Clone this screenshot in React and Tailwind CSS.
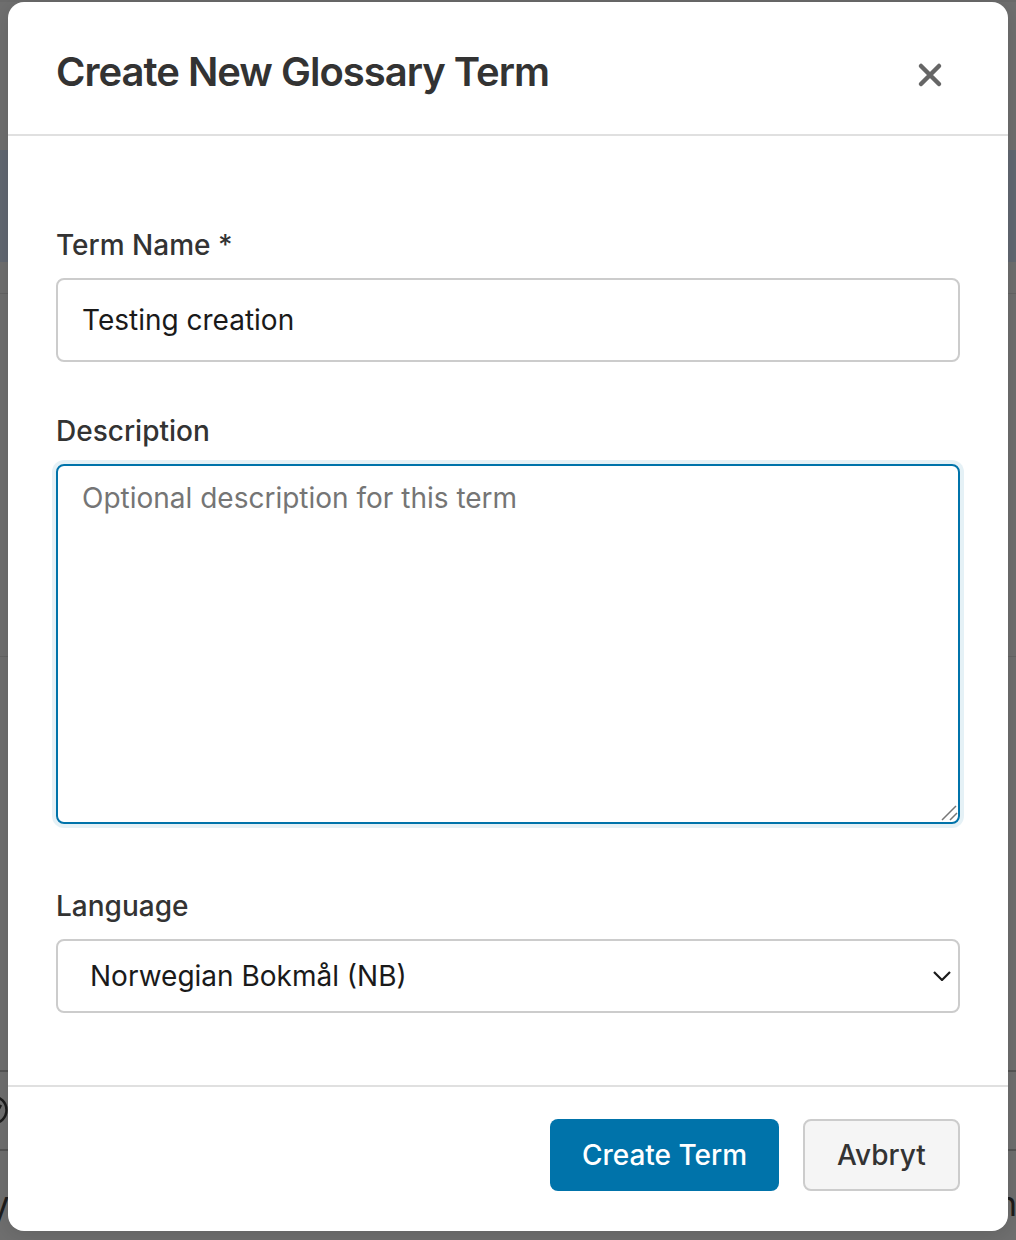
import React from "react";

const font = { fontFamily: "Inter, sans-serif" };

// page behind the overlay, only slivers of it show at the edges
const Backdrop = () => (
  <div className="flex flex-col h-full bg-[#6f6f6f]">
    <div className="h-[2px] bg-[#6a6a6a]" />
    <div className="h-[148px]" />
    <div className="h-[112px] bg-[#626872]" />
    <div className="h-[31px]" />
    <div className="h-px bg-[#646464]" />
    <div className="h-[362px]" />
    <div className="h-px bg-[#646464]" />
    <div className="h-[413px]" />
    <div className="h-[2px] bg-[#555555]" />
    <div className="h-[77px] pt-[23px] -ml-[22px]">
      <svg width="30" height="30" viewBox="0 0 30 30" fill="none" stroke="#1c1c1c" strokeWidth="2.5">
        <circle cx="15" cy="15" r="13.5" />
        <path d="M23 10L17 21" />
      </svg>
    </div>
    <div className="h-[2px] bg-[#555555]" />
    <div className="flex flex-1 items-start justify-between -ml-[14px] -mr-[1px] text-[34px] leading-[40px] text-[#1c1c1c]">
      <span className="mt-[39px]">V</span>
      <span className="mt-[33px]">n</span>
    </div>
  </div>
);

const Label = ({ children, className = "" }) => (
  <label className={`block text-[28px] leading-[33px] font-medium text-[#333333] ${className}`}>
    {children}
  </label>
);

export default function App() {
  return (
    <div className="relative w-[1016px] h-[1240px] overflow-hidden" style={font}>
      <Backdrop />
      <div className="absolute left-2 right-2 top-[2px] flex flex-col h-[1229px] bg-white rounded-[16px] shadow-[0_4px_20px_rgba(0,0,0,0.12)]">
        <div className="flex items-center justify-between h-[134px] border-b-2 border-[#e0e0e0] pl-12 pr-[65px]">
          <h2 className="text-[40px] leading-[48px] font-semibold text-[#333333] tracking-[-1px] mt-[8px]">
            Create New Glossary Term
          </h2>
          <svg width="26" height="26" viewBox="0 0 26 26" fill="none" stroke="#666666" strokeWidth="4.5" className="mt-[13px]">
            <path d="M4 4L22 22M22 4L4 22" strokeLinecap="round" />
          </svg>
        </div>

        <div className="flex-1 px-12 pt-[93px]">
          <Label>Term Name *</Label>
          <input
            readOnly
            value="Testing creation"
            className="block w-full h-[84px] mt-[16px] px-[24px] border-2 border-[#cccccc] rounded-[8px] text-[28px] text-[#1a1a1a] bg-white outline-none"
          />

          <Label className="mt-[53px]">Description</Label>
          <div className="relative mt-[16px] rounded-[8px] shadow-[0_0_0_4px_rgba(0,115,170,0.1)]">
            <textarea
              placeholder="Optional description for this term"
              className="block w-full h-[360px] px-[24px] py-[14px] border-2 border-[#0073aa] rounded-[8px] text-[28px] leading-[36px] bg-white outline-none resize-none placeholder:text-[#757575]"
            />
            <svg width="18" height="18" viewBox="0 0 18 18" fill="none" stroke="#777777" strokeWidth="1.5" className="absolute right-[1px] bottom-[2px]">
              <path d="M1 16L15 2M9 16L16 9" />
            </svg>
          </div>

          <Label className="mt-[66px]">Language</Label>
          <div className="flex items-center justify-between h-[74px] mt-[16px] pl-[32px] pr-[7px] border-2 border-[#cccccc] rounded-[8px] text-[28px] text-[#1a1a1a]">
            Norwegian Bokmål (NB)
            <svg width="18" height="10" viewBox="0 0 18 10" fill="none" stroke="#1a1a1a" strokeWidth="2.2">
              <path d="M1 1L9 9L17 1" />
            </svg>
          </div>
        </div>

        <div className="flex justify-end gap-6 h-[146px] border-t-2 border-[#e0e0e0] px-12 pt-[32px]">
          <button className="h-[72px] w-[229px] rounded-[8px] bg-[#0073aa] text-white text-[28px] font-medium">
            Create Term
          </button>
          <button className="h-[72px] w-[157px] rounded-[8px] border-2 border-[#cccccc] bg-[#f5f5f5] text-[#333333] text-[28px] font-medium">
            Avbryt
          </button>
        </div>
      </div>
    </div>
  );
}
